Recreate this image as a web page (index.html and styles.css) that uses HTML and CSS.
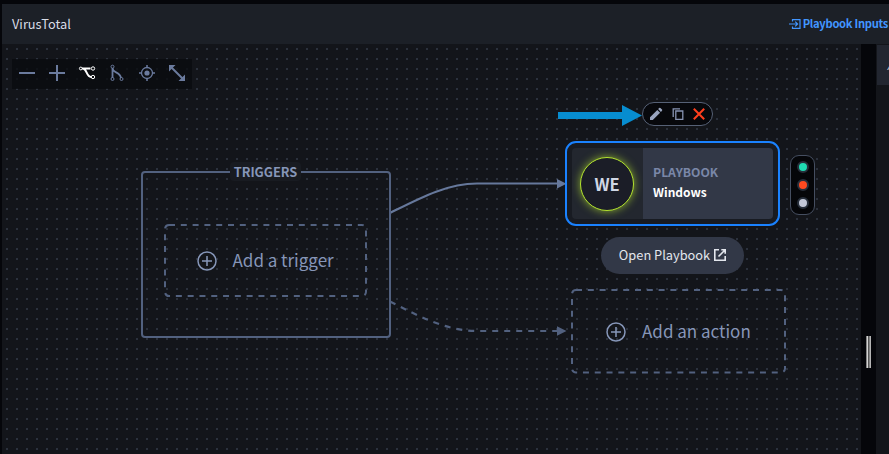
FILE: index.html
```html
<!DOCTYPE html>
<html lang="en">
<head>
<meta charset="utf-8">
<title>VirusTotal</title>
<link rel="stylesheet" href="styles.css">
</head>
<body>
<div class="app">
  <header class="header">
    <span class="title">VirusTotal</span>
    <a class="inputs">
      <svg width="12" height="10" viewBox="0 0 12 10"><path d="M3.500 2.500V.6h7.500v8.800H3.500V7.500M0 5h8.500M6.200 2.600 8.600 5 6.200 7.400"/></svg>
      <span>Playbook Inputs</span>
    </a>
  </header>
  <div class="main">
    <main class="canvas">
      <div class="toolbar">
        <svg class="tool" viewBox="0 0 30 30"><path stroke-width="2" d="M7 14h16"/></svg>
        <svg class="tool" viewBox="0 0 30 30"><path stroke-width="2" d="M7 14h16M15 6v16"/></svg>
        <svg class="tool active" viewBox="0 0 30 30"><path stroke-width="2" d="M10 9.500h8.500M11 9.500c4 .5 3.500 8.500 8 8.500"/><circle cx="8.800" cy="9.500" r="1.400"/><circle cx="21" cy="9.500" r="1.700"/><circle cx="21" cy="18" r="1.700"/></svg>
        <svg class="tool" viewBox="0 0 30 30"><path stroke-width="1.800" d="M10.500 9v10M10.500 9c0 5.500 7.500 3 8.500 10"/><circle cx="10.500" cy="7.700" r="1.500"/><circle cx="10.500" cy="20" r="1.500"/><circle cx="19.500" cy="20" r="1.500"/></svg>
        <svg class="tool" viewBox="0 0 30 30"><circle cx="15" cy="14" r="5.500" stroke-width="1.300"/><circle class="solid" cx="15" cy="14" r="2.600"/><path stroke-width="1.500" d="M15 6v3M15 19v3M7 14h3M20 14h3"/></svg>
        <svg class="tool" viewBox="0 0 30 30"><path stroke-width="2" d="m9 8 12 12"/><path class="solid" d="M7 6h6.500L7 12.500zM23 22h-6.500l6.500-6.500z"/></svg>
      </div>

      <svg class="edges" width="859" height="410" viewBox="2 44 859 410">
        <path class="edge" d="M390 213C420 198 447 183.500 477 183.500H559"/>
        <path class="tip" d="M557 179v9.500l9.500-4.700z"/>
        <path class="edge next" d="M390 301.500C420 317 447 331 477 331H559"/>
        <path class="tip next" d="M557 326.300v9.500l9.500-4.800z"/>
      </svg>

      <section class="triggers">
        <h2 class="triggers-label">TRIGGERS</h2>
        <div class="slot trigger-slot">
          <svg class="outline" width="203" height="73"><rect x="1" y="1" width="201" height="71" rx="4"/></svg>
          <svg class="plus" width="20" height="20"><circle cx="10" cy="10" r="9"/><path d="M5 10h10M10 5v10"/></svg>
          <span>Add a trigger</span>
        </div>
      </section>

      <div class="slot action-slot">
        <svg class="outline" width="215" height="85"><rect x="1" y="1" width="213" height="82.500" rx="4"/></svg>
        <svg class="plus" width="20" height="20"><circle cx="10" cy="10" r="9"/><path d="M5 10h10M10 5v10"/></svg>
        <span>Add an action</span>
      </div>

      <article class="node">
        <div class="node-icon"><span class="badge">WE</span></div>
        <div class="node-text"><span class="kind">PLAYBOOK</span><span class="name">Windows</span></div>
      </article>

      <div class="status"><i class="dot ok"></i><i class="dot fail"></i><i class="dot idle"></i></div>

      <div class="node-actions">
        <svg width="14" height="14" viewBox="0 0 14 14"><path class="fill" d="M1 13v-2.800L8.300 2.900l2.800 2.800L3.800 13zM9.100 2.100l1.100-1.100q.6-.5 1.200 0l1.600 1.600q.5.600 0 1.200l-1.100 1.100z"/></svg>
        <svg width="12" height="12" viewBox="0 0 12 12"><path class="line" d="M1.200 9V.8H8M3.800 3h7v8.300h-7z"/></svg>
        <svg width="12" height="12" viewBox="0 0 12 12"><path class="cross" d="m.8.8 10.400 10.400M11.200.8.8 11.200"/></svg>
      </div>
      <svg class="pointer" width="84" height="22" viewBox="0 0 84 22"><path d="M0 7h64V0l20 10.500L64 21v-7H0z"/></svg>

      <button class="open">
        <span>Open Playbook</span>
        <svg width="12" height="12" viewBox="0 0 12 12"><path d="M5 .8H.8v10.400h10.400V7M7.300.8h3.900v4M11 1 4.500 7.500"/></svg>
      </button>
    </main>
    <div class="splitter"><span class="grip"></span></div>
    <aside class="side"><div class="tab">A</div></aside>
  </div>
</div>
</body>
</html>
```
FILE: styles.css
```css
* { box-sizing: border-box; }
body {
  margin: 0;
  background: #05060a;
  font-family: "Noto Sans CJK SC", "Noto Sans", sans-serif;
  overflow: hidden;
}
svg { display: block; fill: none; flex: none; }
.app { height: 454px; padding: 4px 0 0 2px; display: flex; flex-direction: column; }
.header {
  height: 40px;
  flex: none;
  display: flex;
  align-items: center;
  justify-content: space-between;
  padding: 0 1px 0 10px;
  background: #1c2027;
  white-space: nowrap;
}
.title { color: #d8dce6; font-size: 12.800px; margin-top: -2px; }
.inputs { display: flex; align-items: center; gap: 2px; color: #4296ff; font-size: 11.200px; letter-spacing: -.3px; font-weight: 700; }
.inputs span { margin-top: -2px; }
.inputs svg { stroke: #4296ff; stroke-width: 1.2; }
.main { flex: 1; display: flex; min-height: 0; }
.canvas {
  position: relative;
  width: 859px;
  flex: none;
  background-color: #13151a;
  background-image: linear-gradient(90deg, transparent 2px, #13151a 2px), linear-gradient(#2b313d 2px, transparent 2px);
  background-size: 10px 10px;
  background-position: 4px 4px;
  overflow: hidden;
}
.toolbar { display: flex; width: 180px; height: 30px; margin: 15px 0 0 10px; background: rgba(9, 11, 15, .78); }
.tool { width: 30px; height: 30px; stroke: #6b7b9e; }
.tool .solid { fill: #6b7b9e; stroke: none; }
.tool.active { stroke: #fff; }
.edges { position: absolute; left: 0; top: 0; }
.edge { stroke: #66789b; stroke-width: 2.2; }
.edge.next { stroke: #52617f; stroke-dasharray: 6 6; }
.tip { fill: #66789b; }
.tip.next { fill: #52617f; }
.triggers {
  position: absolute;
  left: 138.500px;
  top: 127px;
  width: 250px;
  height: 167px;
  border: 2px solid #52617f;
  border-radius: 4px;
  display: flex;
  flex-direction: column;
  align-items: center;
}
.triggers-label {
  margin: -11px 0 0;
  width: 71px;
  height: 19px;
  background: #181b21;
  border-radius: 4px;
  color: #8696b8;
  font-size: 12.800px;
  line-height: 19px;
  text-align: center;
}
.slot { position: relative; display: flex; align-items: center; color: #8696b8; font-size: 17px; white-space: nowrap; gap: 16px; }
.slot span { margin-top: -2px; }
.outline { position: absolute; left: 0; top: 0; }
.outline rect { stroke: #52617f; stroke-width: 2; stroke-dasharray: 6 5.8; }
.plus { stroke: #8696b8; stroke-width: 1.5; }
.trigger-slot { width: 203px; height: 73px; margin: 43px 1px 0 0; padding-left: 33px; }
.action-slot { position: absolute; left: 569px; top: 245px; width: 215px; height: 85px; padding-left: 35px; }
.node {
  position: absolute;
  left: 563px;
  top: 97px;
  width: 215px;
  height: 85px;
  padding: 5px;
  border: 2.500px solid #1a82ff;
  border-radius: 11px;
  background: #181b22;
  display: flex;
}
.node-icon { width: 71px; display: flex; align-items: center; justify-content: center; background: #23272f; border-radius: 4px 0 0 4px; }
.badge {
  width: 54px;
  height: 54px;
  margin-left: -1px;
  border: 1.500px solid #b3e32f;
  border-radius: 50%;
  background: #1b1d27;
  box-shadow: 0 0 8px rgba(179, 227, 47, .7);
  color: #d0d7e5;
  font-size: 16.500px;
  font-weight: 700;
  line-height: 52px;
  text-align: center;
}
.node-text { flex: 1; display: flex; flex-direction: column; justify-content: center; padding: 0 0 4px 10px; background: #323847; border-radius: 0 4px 4px 0; line-height: 19px; font-weight: 700; }
.kind { color: #7a87a8; font-size: 12.200px; }
.name { color: #fff; font-size: 12px; }
.status {
  position: absolute;
  left: 788px;
  top: 111px;
  width: 25px;
  height: 60px;
  border: 1px solid #454e60;
  border-radius: 9px;
  background: #050609;
  display: flex;
  flex-direction: column;
  align-items: center;
  justify-content: center;
  gap: 6px;
}
.dot { width: 12px; height: 12px; border: 2px solid #272f3b; border-radius: 50%; }
.ok { background: #1fdbb2; }
.fail { background: #ff4a20; }
.idle { background: #c3c8d8; }
.node-actions {
  position: absolute;
  left: 640px;
  top: 58px;
  width: 71px;
  height: 24px;
  border: 1px solid #566176;
  border-radius: 12px;
  background: #07080c;
  display: flex;
  align-items: center;
  gap: 9px;
  padding-left: 6px;
}
.fill { fill: #9aa5bf; }
.line { stroke: #8793b2; stroke-width: 1.300; }
.cross { stroke: #ff3f1e; stroke-width: 2; }
.pointer { position: absolute; left: 556px; top: 61px; fill: #078dd0; }
.open {
  position: absolute;
  left: 599px;
  top: 193px;
  width: 143px;
  height: 37px;
  border: 0;
  border-radius: 19px;
  padding: 0;
  display: flex;
  align-items: center;
  justify-content: center;
  gap: 4px;
  background: #323847;
  color: #e3e6ed;
  font: 400 12.800px "Noto Sans CJK SC", sans-serif;
  white-space: nowrap;
}
.open span { margin-top: -2px; }
.open svg { stroke: #e3e6ed; stroke-width: 1.6; margin-top: -1px; }
.splitter { width: 15px; display: flex; align-items: center; background: #05060a; flex: none; }
.grip { width: 5px; height: 32px; margin: 206px 0 0 5px; background: linear-gradient(90deg, #858585 0 1px, #d5d5d5 1px 2px, #555 2px 3px, #858585 3px 4px, #b5b5b5 4px); }
.side { flex: 1; background: #13151a; padding: 1px 0 0 1px; overflow: hidden; }
.tab { height: 40px; padding-left: 10px; background: #222630; color: #b5bdce; font-size: 13px; font-style: italic; line-height: 40px; }
```
